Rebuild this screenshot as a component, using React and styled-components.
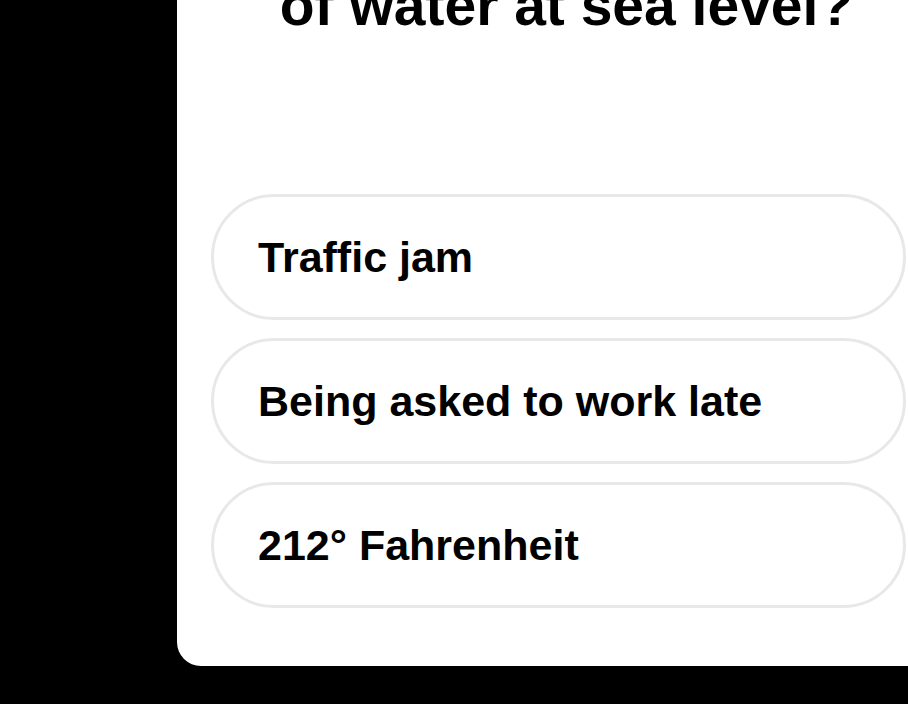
import React from 'react';
import styled, { createGlobalStyle } from 'styled-components';

const GlobalStyle = createGlobalStyle`
  html, body {
    margin: 0;
    padding: 0;
    background: #000;
    overflow: hidden;
    width: 908px;
    height: 704px;
  }
  * {
    box-sizing: border-box;
  }
`;

const Stage = styled.div`
  width: 908px;
  height: 704px;
  padding-left: 177px;
  font-family: 'Liberation Sans', Arial, sans-serif;
  color: #000;
`;

const Card = styled.div`
  width: 763px;
  margin-top: -131px;
  padding: 40px 34px 58px;
  background: #fff;
  border-radius: 0 0 24px 24px;
  display: flex;
  flex-direction: column;
`;

const Question = styled.h1`
  margin: 0 0 157px;
  padding-left: 16px;
  font-size: 57px;
  line-height: 64px;
  font-weight: 700;
  text-align: center;
  white-space: nowrap;
`;

const Options = styled.div`
  display: flex;
  flex-direction: column;
  gap: 18px;
`;

const Option = styled.button`
  height: 126px;
  padding: 0 44px;
  display: flex;
  align-items: center;
  background: #fff;
  border: 3px solid #e8e8e8;
  border-radius: 63px;
  font-family: inherit;
  font-size: 43px;
  font-weight: 700;
  color: #000;
  text-align: left;
  cursor: pointer;
`;

const answers = ['Traffic jam', 'Being asked to work late', '212° Fahrenheit'];

export default function App() {
  return (
    <>
      <GlobalStyle />
      <Stage>
        <Card>
          <Question>
            What is the boiling point
            <br />
            of water at sea level?
          </Question>
          <Options>
            {answers.map((a) => (
              <Option key={a}>{a}</Option>
            ))}
          </Options>
        </Card>
      </Stage>
    </>
  );
}
